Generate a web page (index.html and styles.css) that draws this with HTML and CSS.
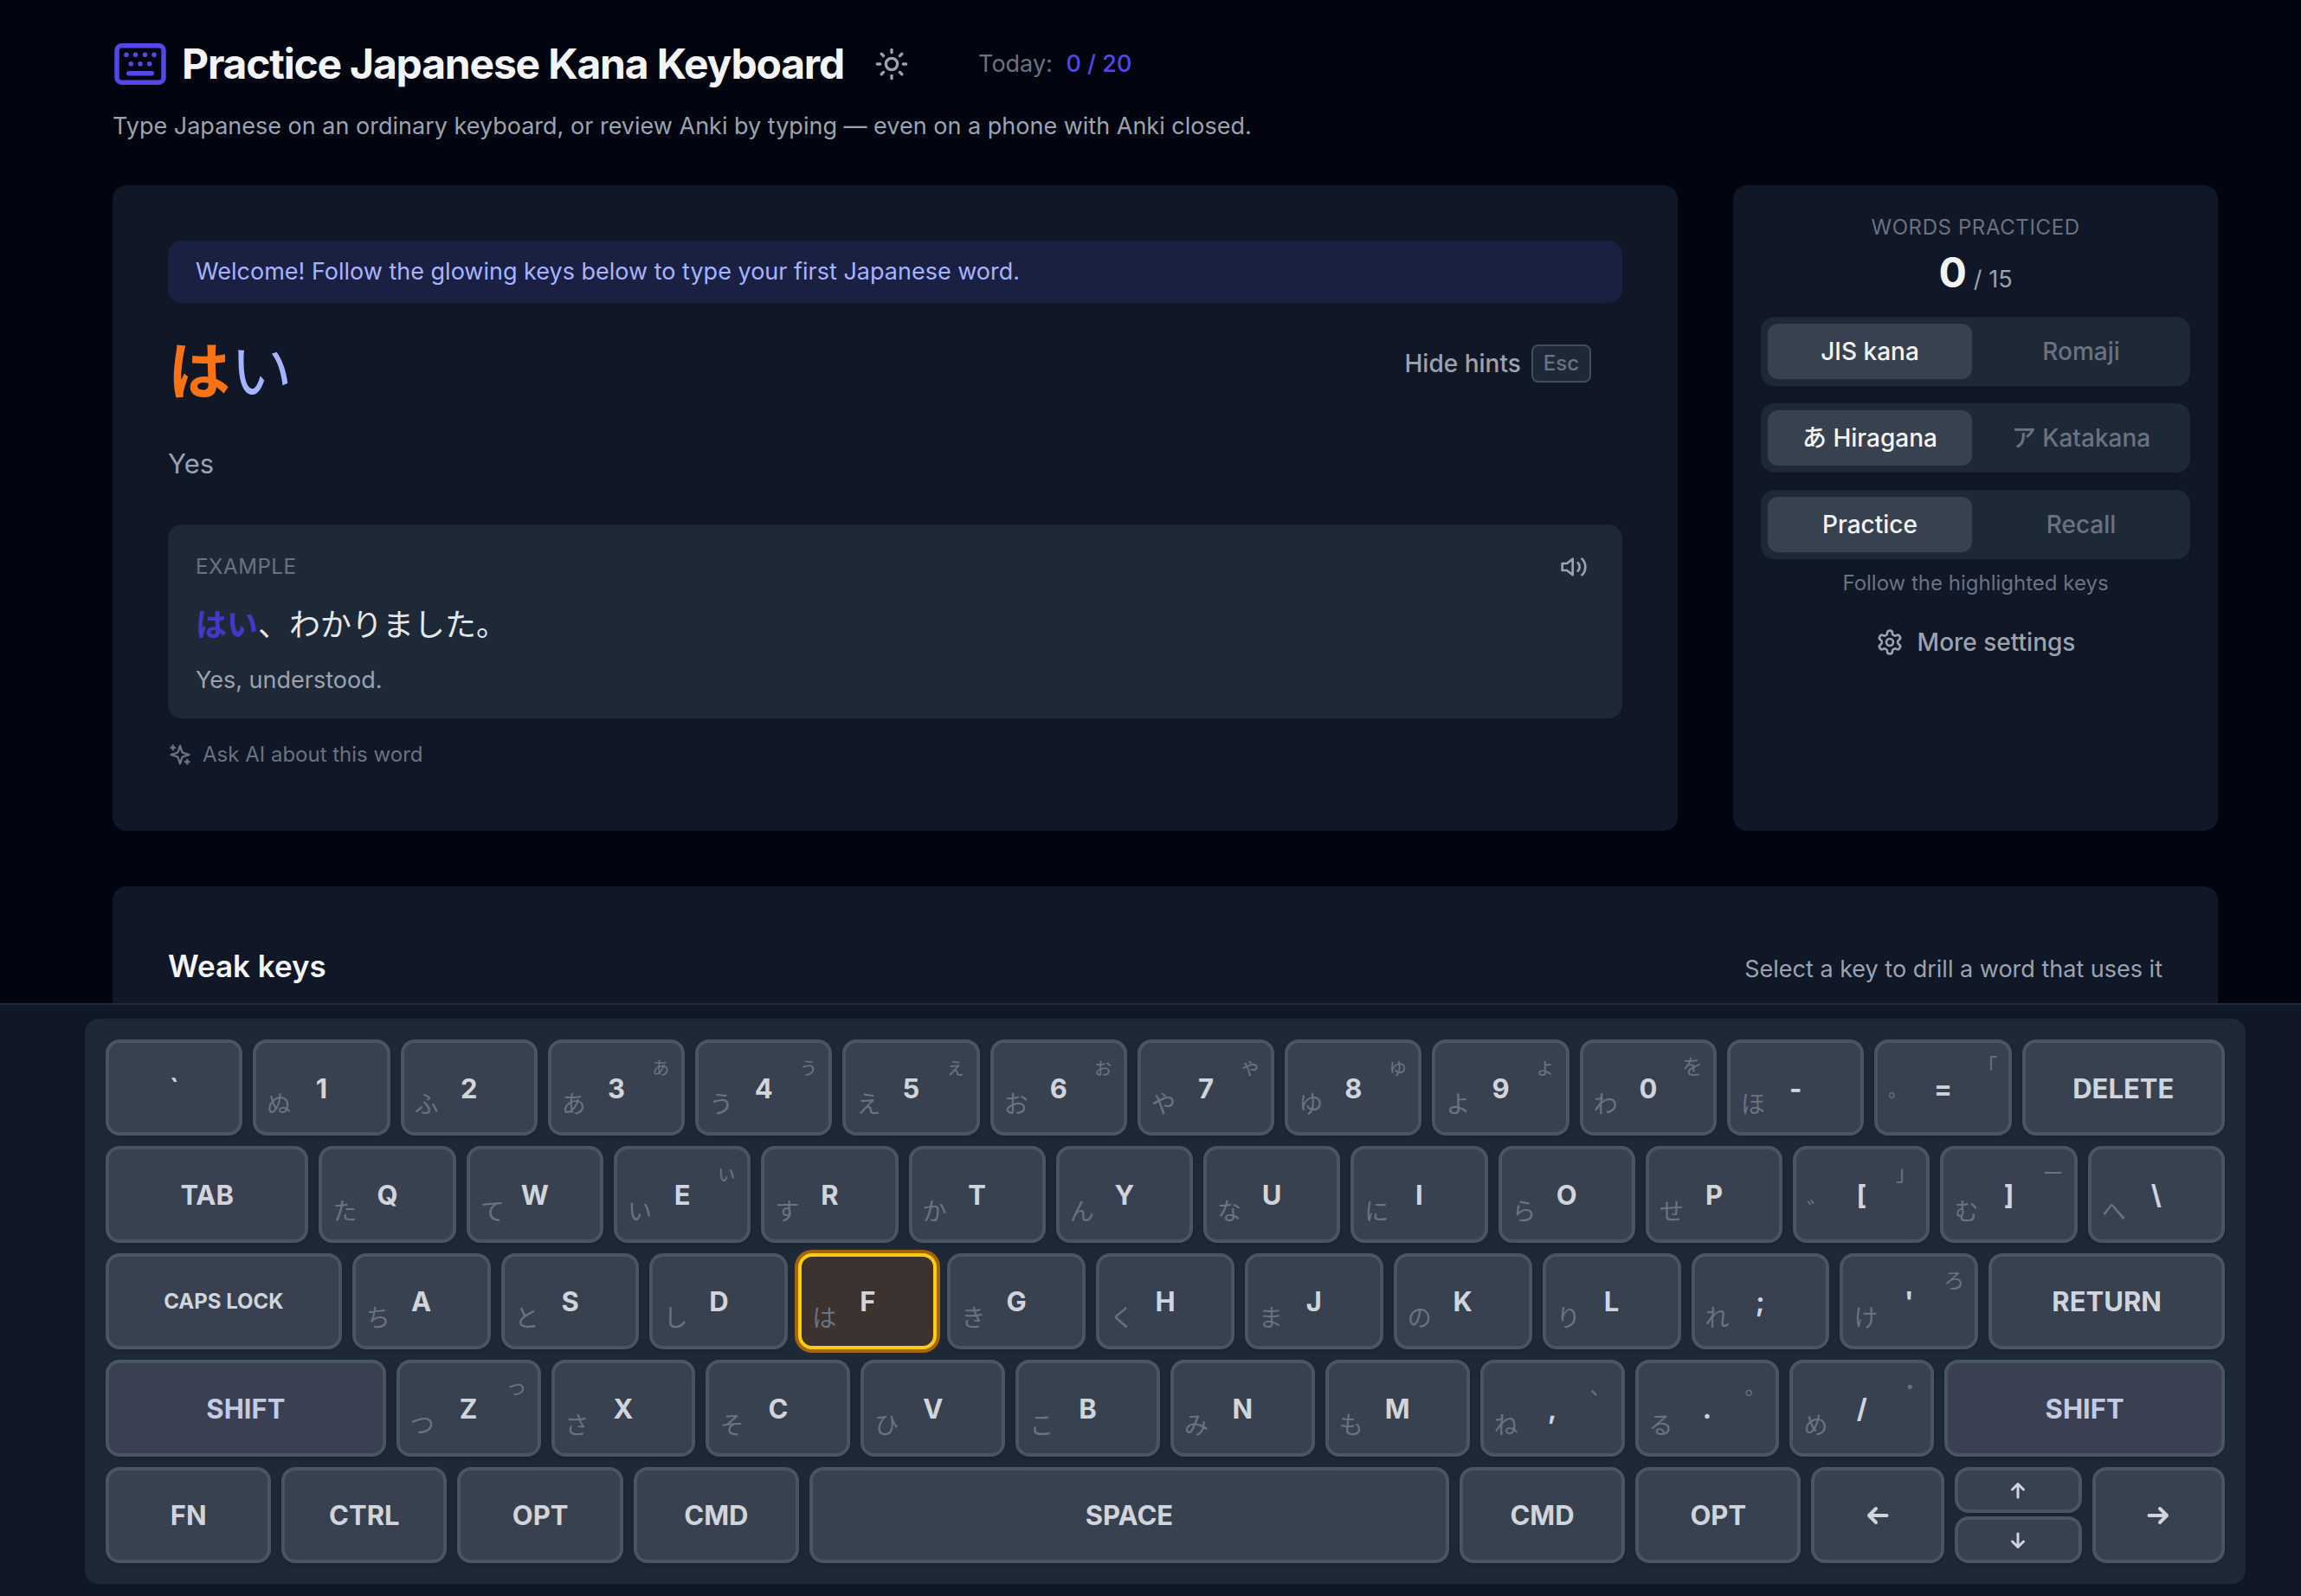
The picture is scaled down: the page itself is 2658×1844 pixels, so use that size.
FILE: index.html
```html
<!DOCTYPE html>
<html lang="en">
<head>
<meta charset="utf-8">
<meta name="viewport" content="width=device-width, initial-scale=1">
<title>Practice Japanese Kana Keyboard</title>
<link rel="stylesheet" href="styles.css">
</head>
<body>
<div class="page">
  <header class="header">
    <div class="title-row">
      <svg class="logo" viewBox="0 0 60 48" fill="none" aria-hidden="true">
        <rect x="3" y="2.75" width="54" height="42.5" rx="5.5" stroke="currentColor" stroke-width="5.5"/>
        <g fill="currentColor">
          <circle cx="14" cy="13.3" r="2.8"/><circle cx="24.5" cy="13.3" r="2.8"/><circle cx="35.5" cy="13.3" r="2.8"/><circle cx="46" cy="13.3" r="2.8"/>
          <circle cx="19.3" cy="23.7" r="2.8"/><circle cx="30" cy="23.7" r="2.8"/><circle cx="40.7" cy="23.7" r="2.8"/>
          <rect x="14" y="32" width="32" height="5.4" rx="2.7"/>
        </g>
      </svg>
      <h1 class="title">Practice Japanese Kana Keyboard</h1>
      <button class="icon-button theme" type="button" aria-label="Toggle theme">
        <svg class="icon icon-sun" viewBox="0 0 24 24"><circle cx="12" cy="12" r="4"/><path d="M12 2v2M12 20v2M4.93 4.93l1.41 1.41M17.66 17.66l1.41 1.41M2 12h2M20 12h2M6.34 17.66l-1.41 1.41M19.07 4.93l-1.41 1.41"/></svg>
      </button>
      <p class="today">Today: <span class="today-count">0 / 20</span></p>
    </div>
    <p class="subtitle">Type Japanese on an ordinary keyboard, or review Anki by typing — even on a phone with Anki closed.</p>
  </header>

  <main class="content">
    <div class="columns">
      <section class="card practice">
        <p class="welcome">Welcome! Follow the glowing keys below to type your first Japanese word.</p>
        <div class="word-row">
          <p class="word" lang="ja"><span class="kana-current">は</span><span class="kana-next">い</span></p>
          <button class="hints" type="button">Hide hints <kbd class="kbd">Esc</kbd></button>
        </div>
        <p class="meaning">Yes</p>
        <div class="example">
          <div class="example-head">
            <h2 class="eyebrow">EXAMPLE</h2>
            <button class="icon-button" type="button" aria-label="Play audio">
              <svg class="icon icon-audio" viewBox="0 0 24 24"><path d="M11 5 6 9H2v6h4l5 4V5zM15.54 8.46a5 5 0 0 1 0 7.07M19.07 4.93a10 10 0 0 1 0 14.14"/></svg>
            </button>
          </div>
          <p class="sentence" lang="ja"><span class="sentence-word">はい</span>、わかりました。</p>
          <p class="translation">Yes, understood.</p>
        </div>
        <button class="ask" type="button">
          <svg class="icon icon-ask" viewBox="0 0 24 24"><path d="m12 3-1.912 5.813a2 2 0 0 1-1.275 1.275L3 12l5.813 1.912a2 2 0 0 1 1.275 1.275L12 21l1.912-5.813a2 2 0 0 1 1.275-1.275L21 12l-5.813-1.912a2 2 0 0 1-1.275-1.275L12 3ZM5 3v4M19 17v4M3 5h4M17 19h4"/></svg>
          Ask AI about this word
        </button>
      </section>

      <aside class="card side">
        <h2 class="eyebrow">WORDS PRACTICED</h2>
        <p class="score"><strong class="score-done">0</strong><span>/ 15</span></p>
        <div class="toggles">
          <div class="toggle"><button class="option selected" type="button">JIS kana</button><button class="option" type="button">Romaji</button></div>
          <div class="toggle"><button class="option selected" type="button">あ Hiragana</button><button class="option" type="button">ア Katakana</button></div>
          <div class="toggle"><button class="option selected" type="button">Practice</button><button class="option" type="button">Recall</button></div>
        </div>
        <p class="mode-note">Follow the highlighted keys</p>
        <button class="settings" type="button">
          <svg class="icon icon-settings" viewBox="0 0 24 24"><path d="M12.22 2h-.44a2 2 0 0 0-2 2v.18a2 2 0 0 1-1 1.73l-.43.25a2 2 0 0 1-2 0l-.15-.08a2 2 0 0 0-2.73.73l-.22.38a2 2 0 0 0 .73 2.73l.15.1a2 2 0 0 1 1 1.72v.51a2 2 0 0 1-1 1.74l-.15.09a2 2 0 0 0-.73 2.73l.22.38a2 2 0 0 0 2.73.73l.15-.08a2 2 0 0 1 2 0l.43.25a2 2 0 0 1 1 1.73V20a2 2 0 0 0 2 2h.44a2 2 0 0 0 2-2v-.18a2 2 0 0 1 1-1.73l.43-.25a2 2 0 0 1 2 0l.15.08a2 2 0 0 0 2.73-.73l.22-.39a2 2 0 0 0-.73-2.73l-.15-.08a2 2 0 0 1-1-1.74v-.5a2 2 0 0 1 1-1.74l.15-.09a2 2 0 0 0 .73-2.73l-.22-.38a2 2 0 0 0-2.73-.73l-.15.08a2 2 0 0 1-2 0l-.43-.25a2 2 0 0 1-1-1.73V4a2 2 0 0 0-2-2z"/><circle cx="12" cy="12" r="3"/></svg>
          More settings
        </button>
      </aside>
    </div>

    <section class="card weak">
      <h2 class="weak-title">Weak keys</h2>
      <p class="weak-note">Select a key to drill a word that uses it</p>
    </section>
  </main>
</div>

<div class="dock">
  <div class="keyboard">
    <div class="row row-numbers">
      <button class="key" type="button">`</button>
      <button class="key" type="button">1<span class="kana">ぬ</span></button>
      <button class="key" type="button">2<span class="kana">ふ</span></button>
      <button class="key" type="button">3<span class="kana">あ</span><span class="kana-shift">ぁ</span></button>
      <button class="key" type="button">4<span class="kana">う</span><span class="kana-shift">ぅ</span></button>
      <button class="key" type="button">5<span class="kana">え</span><span class="kana-shift">ぇ</span></button>
      <button class="key" type="button">6<span class="kana">お</span><span class="kana-shift">ぉ</span></button>
      <button class="key" type="button">7<span class="kana">や</span><span class="kana-shift">ゃ</span></button>
      <button class="key" type="button">8<span class="kana">ゆ</span><span class="kana-shift">ゅ</span></button>
      <button class="key" type="button">9<span class="kana">よ</span><span class="kana-shift">ょ</span></button>
      <button class="key" type="button">0<span class="kana">わ</span><span class="kana-shift">を</span></button>
      <button class="key" type="button">-<span class="kana">ほ</span></button>
      <button class="key" type="button">=<span class="kana">゜</span><span class="kana-shift">「</span></button>
      <button class="key" type="button">DELETE</button>
    </div>
    <div class="row row-top">
      <button class="key" type="button">TAB</button>
      <button class="key" type="button">Q<span class="kana">た</span></button>
      <button class="key" type="button">W<span class="kana">て</span></button>
      <button class="key" type="button">E<span class="kana">い</span><span class="kana-shift">ぃ</span></button>
      <button class="key" type="button">R<span class="kana">す</span></button>
      <button class="key" type="button">T<span class="kana">か</span></button>
      <button class="key" type="button">Y<span class="kana">ん</span></button>
      <button class="key" type="button">U<span class="kana">な</span></button>
      <button class="key" type="button">I<span class="kana">に</span></button>
      <button class="key" type="button">O<span class="kana">ら</span></button>
      <button class="key" type="button">P<span class="kana">せ</span></button>
      <button class="key" type="button">[<span class="kana">゛</span><span class="kana-shift">」</span></button>
      <button class="key" type="button">]<span class="kana">む</span><span class="kana-shift">ー</span></button>
      <button class="key" type="button">\<span class="kana">へ</span></button>
    </div>
    <div class="row row-home">
      <button class="key key-caps" type="button">CAPS LOCK</button>
      <button class="key" type="button">A<span class="kana">ち</span></button>
      <button class="key" type="button">S<span class="kana">と</span></button>
      <button class="key" type="button">D<span class="kana">し</span></button>
      <button class="key key-target" type="button">F<span class="kana">は</span></button>
      <button class="key" type="button">G<span class="kana">き</span></button>
      <button class="key" type="button">H<span class="kana">く</span></button>
      <button class="key" type="button">J<span class="kana">ま</span></button>
      <button class="key" type="button">K<span class="kana">の</span></button>
      <button class="key" type="button">L<span class="kana">り</span></button>
      <button class="key" type="button">;<span class="kana">れ</span></button>
      <button class="key" type="button">'<span class="kana">け</span><span class="kana-shift">ろ</span></button>
      <button class="key" type="button">RETURN</button>
    </div>
    <div class="row row-bottom">
      <button class="key key-shift" type="button">SHIFT</button>
      <button class="key" type="button">Z<span class="kana">つ</span><span class="kana-shift">っ</span></button>
      <button class="key" type="button">X<span class="kana">さ</span></button>
      <button class="key" type="button">C<span class="kana">そ</span></button>
      <button class="key" type="button">V<span class="kana">ひ</span></button>
      <button class="key" type="button">B<span class="kana">こ</span></button>
      <button class="key" type="button">N<span class="kana">み</span></button>
      <button class="key" type="button">M<span class="kana">も</span></button>
      <button class="key" type="button">,<span class="kana">ね</span><span class="kana-shift">、</span></button>
      <button class="key" type="button">.<span class="kana">る</span><span class="kana-shift">。</span></button>
      <button class="key" type="button">/<span class="kana">め</span><span class="kana-shift">・</span></button>
      <button class="key key-shift" type="button">SHIFT</button>
    </div>
    <div class="row row-space">
      <button class="key" type="button">FN</button>
      <button class="key" type="button">CTRL</button>
      <button class="key" type="button">OPT</button>
      <button class="key" type="button">CMD</button>
      <button class="key" type="button">SPACE</button>
      <button class="key" type="button">CMD</button>
      <button class="key" type="button">OPT</button>
      <button class="key" type="button" aria-label="Left"><svg class="arrow" viewBox="0 0 26 22"><path d="M23.5 11H3M11 3 3 11l8 8"/></svg></button>
      <div class="arrow-stack">
        <button class="key" type="button" aria-label="Up"><svg class="arrow-small" viewBox="0 0 18 20"><path d="M9 18V2.5M2.5 9 9 2.5 15.5 9"/></svg></button>
        <button class="key" type="button" aria-label="Down"><svg class="arrow-small" viewBox="0 0 18 20"><path d="M9 2v15.5M2.5 11 9 17.5 15.5 11"/></svg></button>
      </div>
      <button class="key" type="button" aria-label="Right"><svg class="arrow" viewBox="0 0 26 22"><path d="M2.5 11H23M15 3l8 8-8 8"/></svg></button>
    </div>
  </div>
</div>
</body>
</html>
```
FILE: styles.css
```css
:root {
  --page: #020510;
  --surface: #101726;
  --raised: #1e2937;
  --key: #37414f;
  --edge: #4a5563;
  --muted: #6b7280;
  --soft: #9ca3af;
  --bright: #f3f4f6;
  --accent: #5247eb;
}

* { box-sizing: border-box; }

html, body { height: 100%; }

body {
  margin: 0;
  overflow: hidden;
  background: var(--page);
  color: var(--soft);
  font-family: Inter, "Noto Sans CJK JP", sans-serif;
  font-size: 27px;
  line-height: 40px;
}

h1, h2, p { margin: 0; }

button {
  margin: 0;
  padding: 0;
  border: 0;
  background: none;
  color: inherit;
  font: inherit;
  cursor: pointer;
}

.icon {
  display: block;
  fill: none;
  stroke: currentColor;
  stroke-width: 2;
  stroke-linecap: round;
  stroke-linejoin: round;
}

.icon-sun { width: 40px; height: 40px; }
.icon-audio { width: 32px; height: 32px; }
.icon-ask { width: 28px; height: 28px; }
.icon-settings { width: 32px; height: 32px; }

.page { padding: 42px 96px 0 130px; }

/* Header */
.header {
  display: flex;
  flex-direction: column;
  gap: 20px;
  margin-bottom: 48px;
}

.title-row {
  display: flex;
  align-items: center;
  height: 64px;
}

.logo {
  width: 60px;
  height: 48px;
  margin: 0 18px 0 2px;
  color: var(--accent);
}

.title {
  color: var(--bright);
  font-size: 48px;
  font-weight: 700;
  line-height: 64px;
  letter-spacing: -0.025em;
}

.theme { margin: 0 80px 0 35px; }

.today { color: var(--muted); }

.today-count {
  margin-left: 8px;
  color: var(--accent);
  font-weight: 500;
}

/* Cards */
.content {
  display: flex;
  flex-direction: column;
  gap: 64px;
}

.columns {
  display: grid;
  grid-template-columns: 1fr 560px;
  gap: 64px;
}

.card {
  border-radius: 16px;
  background: var(--surface);
}

.eyebrow {
  color: var(--muted);
  font-size: 24px;
  font-weight: 400;
  line-height: 32px;
  letter-spacing: 0.025em;
}

.practice { padding: 64px; }

.welcome {
  padding: 16px 32px;
  border-radius: 16px;
  background: #1a2042;
  color: #a5b4fc;
}

.word-row {
  display: flex;
  align-items: flex-start;
  justify-content: space-between;
  margin: 26px 0 40px;
}

.word {
  font-family: "Noto Sans CJK JP", sans-serif;
  font-size: 72px;
  line-height: 96px;
}

.kana-current { color: #f97316; font-weight: 700; }
.kana-next { color: #a5b4fc; }

.hints {
  display: flex;
  align-items: center;
  gap: 12px;
  padding: 22px 36px 8px;
  font-size: 28px;
  font-weight: 500;
}

.kbd {
  padding: 4px 12px;
  border: 2px solid #434e5b;
  border-radius: 8px;
  background: var(--raised);
  color: var(--muted);
  font-family: inherit;
  font-size: 24px;
  line-height: 32px;
}

.meaning { font-size: 31px; line-height: 48px; }

.example {
  margin-top: 46px;
  padding: 33px 32px 24px;
  border-radius: 16px;
  background: var(--raised);
}

.example-head {
  display: flex;
  align-items: center;
  justify-content: space-between;
  height: 32px;
  padding-right: 8px;
}

.sentence {
  margin: 20px 0 19px;
  color: #e5e7eb;
  font-family: "Noto Sans CJK JP", sans-serif;
  font-size: 36px;
  line-height: 56px;
}

.sentence-word { color: #4338ca; font-weight: 700; }

.ask {
  display: flex;
  align-items: center;
  gap: 12px;
  margin-top: 16px;
  padding: 10px 0 8px;
  color: var(--muted);
  font-size: 24px;
  line-height: 32px;
}

/* Side panel */
.side {
  display: flex;
  flex-direction: column;
  align-items: center;
  padding: 33px 32px;
}

.score {
  display: flex;
  align-items: baseline;
  gap: 8px;
  height: 56px;
  margin: 8px 0 23px;
}

.score-done {
  color: var(--bright);
  font-size: 48px;
  font-weight: 700;
  line-height: 56px;
}

.toggles {
  display: flex;
  flex-direction: column;
  gap: 20px;
  width: 100%;
}

.toggle {
  display: grid;
  grid-template-columns: 1fr 1fr;
  gap: 8px;
  padding: 8px;
  border-radius: 16px;
  background: var(--raised);
}

.option {
  height: 64px;
  border-radius: 12px;
  color: var(--muted);
  font-size: 28px;
  font-weight: 500;
}

.option.selected { background: var(--key); color: var(--bright); }

.mode-note {
  margin: 12px 0 32px;
  color: var(--muted);
  font-size: 24px;
  line-height: 32px;
}

.settings {
  display: flex;
  align-items: center;
  gap: 16px;
  font-size: 28px;
  font-weight: 500;
}

.weak {
  display: flex;
  align-items: baseline;
  justify-content: space-between;
  padding: 64px;
}

.weak-title {
  color: var(--bright);
  font-size: 35px;
  font-weight: 600;
  line-height: 56px;
}

/* Keyboard docked to the bottom of the window */
.dock {
  position: fixed;
  right: 0;
  bottom: 0;
  left: 0;
  padding: 16px 64px 14px 98px;
  border-top: 2px solid #1f2937;
  background: var(--surface);
}

.keyboard {
  display: grid;
  grid-auto-rows: 1fr;
  gap: 12px;
  height: 653px;
  padding: 24px;
  border-radius: 16px;
  background: var(--raised);
}

.row { display: grid; gap: 12px; }
.row-numbers { grid-template-columns: repeat(13, 158fr) 234fr; }
.row-top { grid-template-columns: 234fr repeat(13, 158fr); }
.row-home { grid-template-columns: 273fr repeat(11, 160fr) 273fr; }
.row-bottom { grid-template-columns: 324fr repeat(10, 167fr) 324fr; }
.row-space { grid-template-columns: repeat(4, 191fr) 738fr repeat(2, 191fr) 153fr 147fr 153fr; }

.key {
  position: relative;
  display: flex;
  align-items: center;
  justify-content: center;
  min-width: 0;
  min-height: 0;
  padding-top: 2px;
  border: 4px solid var(--edge);
  border-radius: 16px;
  background: var(--key);
  box-shadow: 0 2px 4px rgb(0 0 0 / 15%);
  color: #d1d5db;
  font-size: 31px;
  font-weight: 700;
}

.key-caps { font-size: 24px; }
.key-shift { background: #3a3f52; color: #c3cbe0; }

.key-target {
  border-color: #facc15;
  background: #3c3230;
  box-shadow: 0 0 0 4px #a5640c;
}

.kana,
.kana-shift {
  position: absolute;
  color: #6b7280;
  font-family: "Noto Sans CJK JP", sans-serif;
  font-weight: 400;
}

.kana {
  bottom: 14px;
  left: 12px;
  font-size: 28px;
  line-height: 40px;
}

.kana-shift {
  top: 10px;
  right: 12px;
  font-size: 24px;
  line-height: 32px;
}

.arrow-stack {
  display: grid;
  grid-template-rows: 1fr 1fr;
  gap: 4px;
}

.arrow,
.arrow-small {
  fill: none;
  stroke: currentColor;
  stroke-linecap: round;
  stroke-linejoin: round;
}

.arrow { width: 26px; height: 22px; stroke-width: 4; }
.arrow-small { width: 18px; height: 20px; stroke-width: 3; }
```
